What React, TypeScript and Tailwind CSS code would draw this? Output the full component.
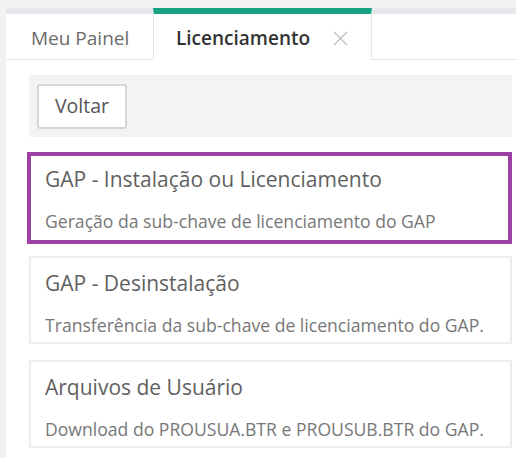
const FONT = { fontFamily: '"Open Sans", "Noto Sans", sans-serif' };

const CARDS = [
  { title: "GAP - Instalação ou Licenciamento", desc: "Geração da sub-chave de licenciamento do GAP", active: true },
  { title: "GAP - Desinstalação", desc: "Transferência da sub-chave de licenciamento do GAP." },
  { title: "Arquivos de Usuário", desc: "Download do PROUSUA.BTR e PROUSUB.BTR do GAP." },
];

function Card({ title, desc, active }: { title: string; desc: string; active?: boolean }) {
  return (
    <div
      className={
        active
          ? "ml-[21px] mr-[4px] h-[92px] border-4 border-[#9d3fa3] bg-white pl-[14px] pt-[9px]"
          : "ml-[23px] mr-[4px] h-[88px] border-2 border-[#ededed] bg-white pl-[14px] pt-[11px]"
      }
    >
      <div className="text-[21px] leading-[28px] whitespace-nowrap text-[#5f5f5f]">{title}</div>
      <div className="mt-[16px] text-[17.6px] leading-[24px] whitespace-nowrap text-[#777]">{desc}</div>
    </div>
  );
}

export default function App() {
  return (
    <div className="h-[458px] w-[516px] overflow-hidden bg-[#f2f2f2] pl-[6px] pt-[8px]" style={FONT}>
      <div className="flex h-[52px]">
        <div className="flex w-[147px] items-center border-b border-t-[6px] border-b-[#e3e6ea] border-t-[#e5e7ea] bg-white pl-[25px] pt-[3px] text-[19px] text-[#6b6b6b]">
          Meu Painel
        </div>
        <div className="flex w-[219px] items-center border-x border-t-[6px] border-x-[#e3e6ea] border-t-[#17a283] bg-white pl-[22px] pt-[3px] text-[19px] font-semibold text-[#333]">
          Licenciamento
          <svg className="ml-[23px]" width="15" height="15" viewBox="0 0 15 15">
            <path d="M1 1L14 14M14 1L1 14" stroke="#c0c0c0" strokeWidth="1.3" />
          </svg>
        </div>
        <div className="flex-1 border-b border-t-[6px] border-b-[#e3e6ea] border-t-[#e5e7ea] bg-white" />
      </div>
      <div className="h-[398px] bg-white pt-[15px]">
        <div className="ml-[23px] mr-[4px] flex h-[62px] items-center bg-[#f3f3f3] pl-[8px]">
          <button className="h-[45px] w-[90px] rounded-[3px] border-2 border-[#d6d6d6] bg-white text-[19.5px] text-[#555]">
            Voltar
          </button>
        </div>
        <div className="mt-[15px]">
          <Card {...CARDS[0]} />
          <div className="mt-[12px] flex flex-col gap-[16px]">
            <Card {...CARDS[1]} />
            <Card {...CARDS[2]} />
          </div>
        </div>
      </div>
    </div>
  );
}
